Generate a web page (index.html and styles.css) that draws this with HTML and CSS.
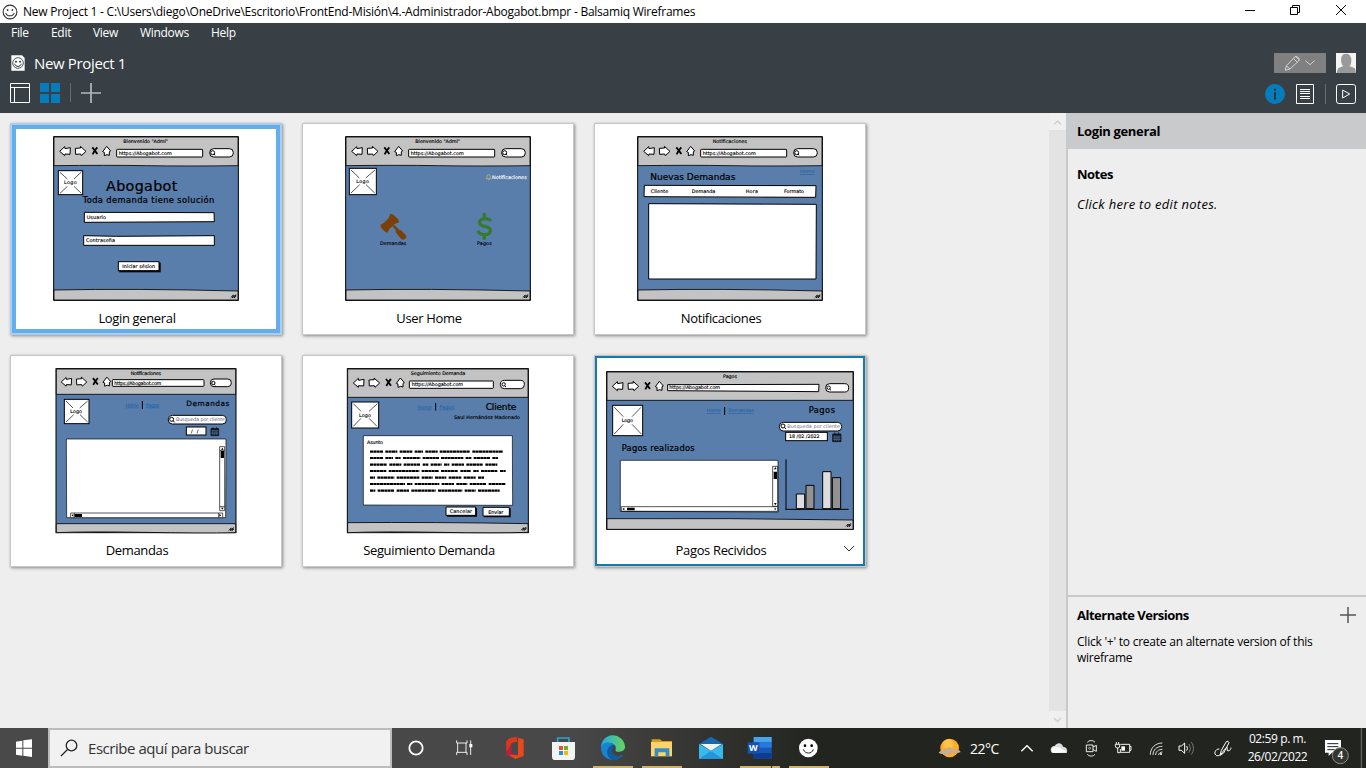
FILE: index.html
```html
<!DOCTYPE html>
<html lang="es">
<head>
<meta charset="utf-8">
<title>New Project 1 - Balsamiq Wireframes</title>
<link rel="stylesheet" href="styles.css">
</head>
<body>
<svg class="defs" width="0" height="0" aria-hidden="true">
  <defs>
    <symbol id="nav" viewBox="170 85 170 45" overflow="visible">
      <g fill="#fff" stroke="#000" stroke-width="3" stroke-linejoin="round">
        <path d="M179 109L194 95L195 101L211 98L210 118L195 117L194 122Z"/>
        <path d="M226 100L242 99L241 94L258 109L244 122L242 117L227 118Z"/>
        <path d="M320 94L332 108L328 110L328 121L321 119L313 122L313 112L308 110Z"/>
      </g>
      <path d="M277 97Q283 104 292 117M292 97Q284 105 278 118" stroke="#000" stroke-width="5.500" fill="none"/>
    </symbol>
    <symbol id="grip" viewBox="0 0 20 16" overflow="visible">
      <path d="M1 12L9 4L6 13L16 3L11 13L18 7" stroke="#000" stroke-width="2.600" fill="none"/>
    </symbol>
    <symbol id="cal" viewBox="0 0 26 28" overflow="visible">
      <path d="M1 5H25V27H1ZM7 0V6M18 0V6" fill="#10151c" stroke="#10151c" stroke-width="2.500"/>
      <path d="M2 11H24M2 16H24M2 21H24M7 11V26M13 11V26M19 11V26" stroke="#5a7eab" stroke-width="1.700"/>
    </symbol>
    <symbol id="face" viewBox="0 0 20 20">
      <circle cx="10" cy="10" r="8.6" fill="#fff" stroke="#333" stroke-width="1.400"/>
      <circle cx="7" cy="7.500" r="1.100" fill="#333"/><circle cx="13" cy="7.500" r="1.100" fill="#333"/>
      <path d="M4.800 11C6 16 14 16 15.200 11" fill="none" stroke="#333" stroke-width="1.300"/>
    </symbol>
  </defs>
</svg>

<header class="titlebar">
  <svg class="title-icon" viewBox="0 0 20 20"><use href="#face"/></svg>
  <span class="title-text">New Project 1 - C:\Users\diego\OneDrive\Escritorio\FrontEnd-Misión\4.-Administrador-Abogabot.bmpr - Balsamiq Wireframes</span>
  <svg class="win-buttons" width="136" height="23" viewBox="0 0 136 23" fill="none" stroke="#000">
    <path d="M15 10.500H25M60.500 7.500H67.500V14.500H60.500ZM62.500 7V5.500H69.500V12.500H68M106 5L116 15M116 5L106 15"/>
  </svg>
</header>

<div class="topbar">
  <nav class="menu">
    <span class="m-file">File</span><span class="m-edit">Edit</span><span class="m-view">View</span><span class="m-windows">Windows</span><span>Help</span>
  </nav>
  <div class="project">
    <svg width="14" height="16" viewBox="0 0 42 48"><path d="M1 1H33L41 9V47H1Z" fill="#fff"/><circle cx="21" cy="24" r="16" fill="#fff" stroke="#333" stroke-width="2.500"/><circle cx="15" cy="20" r="2.500"/><circle cx="27" cy="20" r="2.500"/><path d="M11 26C14 37 28 37 31 26" fill="none" stroke="#333" stroke-width="3"/></svg>
    <span class="project-name">New Project 1</span>
    <svg class="edit-mode" width="52" height="20" viewBox="0 0 156 60"><path fill="#808080" d="M0 0H156V60H0Z"/><path d="M34 52L37 39L62 12Q66 8 71 12L74 15Q78 19 74 24L48 48ZM37 39L48 48M58 16L70 28M64 10L76 21M94 23L108 35L122 23" fill="none" stroke="#ddd" stroke-width="2.600"/></svg>
    <svg width="20" height="20" viewBox="0 0 60 60"><path fill="#f4f4f4" d="M0 0H60V60H0Z"/><path fill="#999" d="M18 35C13 20 14 2 30 2S49 20 44 35L40 39L57 46L60 60H2L6 46L22 39Z"/></svg>
  </div>
  <div class="tools">
    <svg width="110" height="24" viewBox="0 0 110 24" fill="none">
      <path d="M10.500 2.500H29.500V21.500H10.500ZM10.500 6.500H29.500M14.500 6.500V21.500" stroke="#fff"/>
      <path d="M40 2H49V11H40ZM51 2H60V11H51ZM40 13H49V22H40ZM51 13H60V22H51Z" fill="#057dbc"/>
      <path d="M70.500 2V21" stroke="#666b70"/><path d="M91 2V22M81 12H101" stroke="#b5b9bb" stroke-width="1.700"/>
    </svg>
    <svg class="tools-right" width="102" height="24" viewBox="0 0 306 72" fill="none">
      <circle cx="33" cy="39" r="30" fill="#057dbc"/><path d="M33 33V56M33 23V29" stroke="#30383e" stroke-width="6"/>
      <path d="M97.500 10.500H148.500V67.500H97.500ZM108 25.500H138M108 31.500H138M108 37.500H138M108 46.500H138M108 52.500H138" stroke="#fff" stroke-width="3"/>
      <path d="M184.500 9V69" stroke="#666b70" stroke-width="3"/>
      <rect x="217.500" y="10.500" width="57" height="57" rx="7" stroke="#fff" stroke-width="3"/><path d="M236 27L257 39L236 51Z" stroke="#fff" stroke-width="3"/>
    </svg>
  </div>
</div>

<div class="workspace">
  <main class="gallery">
    <article class="card current">
      <svg class="thumb" viewBox="33 27 813 537">
        <rect class="page" x="161" y="65" width="554" height="491"/>
        <path class="bar" d="M162 66H714V152Q560 154 440 152T162 152Z"/>
        <path class="bar" d="M162 525Q400 520 714 528V555H162Z"/>
        <use href="#nav" x="170" y="85" width="170" height="45"/>
        <rect class="box" x="350" y="103" width="258" height="23" rx="2"/><rect class="box" x="629" y="101" width="71" height="25" rx="12"/>
        <circle class="line" cx="638" cy="113" r="6"/><path class="line" d="M642 117L645 121"/>
        <g class="tiny"><text x="370" y="84" textLength="134">Bienvenido "Admi"</text><text x="356" y="119" textLength="159">https://Abogabot.com</text></g>
        <rect class="box" x="175" y="167" width="73" height="72"/><path class="line thin" d="M180 172L202 192M244 171L222 192M180 235L202 214M244 235L222 214"/><text class="tiny" x="192" y="207" textLength="38">Logo</text>
        <text class="hand" x="318" y="227" font-size="43" textLength="214">Abogabot</text>
        <text class="hand" x="248" y="263" font-size="25" textLength="395">Toda demanda tiene solución</text>
        <path class="box" d="M253 292L642 293L643 320L253 322ZM251 362L350 364L643 362L643 391L251 391Z"/>
        <g class="tiny"><text x="260" y="311" textLength="58">Usuario</text><text x="258" y="382" textLength="87">Contraseña</text></g>
        <rect x="358" y="443" width="124" height="29" fill="#000"/><rect class="box" x="355" y="440" width="122" height="27"/>
        <text class="tiny" x="367" y="459" textLength="98">Iniciar sésion</text><use href="#grip" x="691" y="536" width="20" height="16"/>
      </svg>
      <div class="caption">Login general</div>
    </article>

    <article class="card">
      <svg class="thumb" viewBox="24 27 813 537">
        <rect class="page" x="152" y="65" width="554" height="491"/>
        <path class="bar" d="M153 66H705V152Q550 154 430 152T153 152Z"/>
        <path class="bar" d="M153 525Q390 520 705 528V555H153Z"/>
        <use href="#nav" x="161" y="85" width="170" height="45"/>
        <rect class="box" x="341" y="103" width="258" height="23" rx="2"/><rect class="box" x="620" y="101" width="71" height="25" rx="12"/>
        <circle class="line" cx="629" cy="113" r="6"/><path class="line" d="M633 117L636 121"/>
        <g class="tiny"><text x="361" y="84" textLength="134">Bienvenido "Admi"</text><text x="347" y="119" textLength="159">https://Abogabot.com</text></g>
        <rect class="box" x="163" y="160" width="81" height="79"/><path class="line thin" d="M168 165L193 189M240 165L212 189M168 234L194 209M239 234L213 209"/><text class="tiny" x="184" y="205" textLength="38">Logo</text>
        <path d="M573 191Q577 188 576 183Q577 179 581 179Q585 179 586 183Q585 188 589 191ZM578 194H584" fill="none" stroke="#d0c65a" stroke-width="2"/>
        <text class="tiny white" x="591" y="191" textLength="104">Notificaciones</text>
        <g fill="#7b3f08"><path d="M257 329L267 323L281 309L286 296L295 299L310 313L312 322L300 326L283 342L278 353L268 349L257 337Z"/><path d="M302 352Q300 347 306 342L313 345L318 346L334 362V368L326 374L319 373Z"/><path d="M292 334L298 329L313 345L307 350Z"/></g>
        <path d="M587 318C582 309 553 306 554 324C555 339 588 329 586 347C583 364 553 362 549 347M568 294V309M568 359V374" fill="none" stroke="#367a2b" stroke-width="10"/>
        <g class="tiny"><text x="255" y="391" textLength="79">Demandas</text><text x="546" y="391" textLength="44">Pagos</text></g><use href="#grip" x="682" y="536" width="20" height="16"/>
      </svg>
      <div class="caption">User Home</div>
    </article>

    <article class="card">
      <svg class="thumb" viewBox="15 27 813 537">
        <rect class="page" x="143" y="65" width="554" height="491"/>
        <path class="bar" d="M144 66H696V152Q540 154 420 152T144 152Z"/>
        <path class="bar" d="M144 525Q380 520 696 528V555H144Z"/>
        <use href="#nav" x="152" y="85" width="170" height="45"/>
        <rect class="box" x="332" y="103" width="258" height="23" rx="2"/><rect class="box" x="611" y="101" width="71" height="25" rx="12"/>
        <circle class="line" cx="620" cy="113" r="6"/><path class="line" d="M624 117L627 121"/>
        <g class="tiny"><text x="368" y="84" textLength="103">Notificaciones</text><text x="338" y="119" textLength="159">https://Abogabot.com</text></g>
        <text class="hand" x="181" y="195" font-size="27" textLength="255">Nuevas Demandas</text><text class="tiny link" x="630" y="175" textLength="44">Home</text>
        <path class="box" d="M163 211L678 212L677 247L162 245ZM176 266L679 268L678 492H176Z"/>
        <g class="tiny"><text x="182" y="234" textLength="53">Cliente</text><text x="305" y="234" textLength="71">Demanda</text><text x="467" y="234" textLength="37">Hora</text><text x="582" y="234" textLength="60">Formato</text></g><use href="#grip" x="673" y="536" width="20" height="16"/>
      </svg>
      <div class="caption">Notificaciones</div>
    </article>

    <article class="card">
      <svg class="thumb" viewBox="33 18 813 537">
        <rect class="page" x="168" y="56" width="540" height="492"/>
        <path class="bar" d="M169 57H707V133H169Z"/><path class="bar" d="M169 521H707V548Q600 550 430 547T169 548Z"/>
        <use href="#nav" x="175" y="72" width="165" height="45"/>
        <rect class="box" x="337" y="89" width="275" height="20" rx="2"/><rect class="box" x="631" y="87" width="63" height="23" rx="11"/>
        <circle class="line" cx="640" cy="99" r="5"/><path class="line" d="M643 103L646 106"/>
        <g class="tiny"><text x="392" y="74" textLength="91">Notificaciones</text><text x="343" y="104" textLength="141">https://Abogabot.com</text></g>
        <rect class="box" x="193" y="148" width="74" height="73"/><path class="line thin" d="M198 153L219 174M263 153L239 174M198 216L221 194M263 216L240 194"/><text class="tiny" x="211" y="190" textLength="35">Logo</text>
        <g class="tiny link"><text x="377" y="170" textLength="40">Home</text><text x="438" y="170" textLength="40">Pagos</text></g><path class="line" d="M427 153V177"/>
        <text class="hand" x="559" y="167" font-size="22" textLength="129">Demandas</text>
        <rect class="box" x="505" y="196" width="174" height="26" rx="12"/><circle class="line" cx="515" cy="208" r="6"/><path class="line" d="M519 212L524 217"/><text class="tiny gray" x="528" y="214" textLength="147">Busqueda por cliente</text>
        <rect class="box" x="559" y="231" width="59" height="24"/><text class="tiny" x="573" y="248" textLength="22">/ /</text><use href="#cal" x="632" y="231" width="25" height="27"/>
        <path class="box thin" d="M199 267L678 267L677 503H200Z"/>
        <path class="box thin" d="M659 290H674V482H659ZM212 489H668V503H212Z"/><path d="M662 303H672V324H662ZM224 492H246V501H224ZM667 293L671 299H663ZM667 479L671 473H663ZM215 496L220 492V500ZM664 496L658 492V500Z"/>
        <path class="line thin" d="M659 302H674M659 470H674M223 489V503M656 489V503"/><use href="#grip" x="685" y="530" width="19" height="15"/>
      </svg>
      <div class="caption">Demandas</div>
    </article>

    <article class="card">
      <svg class="thumb" viewBox="24 18 813 537">
        <rect class="page" x="157" y="56" width="543" height="492"/>
        <path class="bar" d="M158 57H699V142H158Z"/><path class="bar" d="M158 518Q420 516 699 521V547Q600 550 430 547T158 548Z"/>
        <use href="#nav" x="166" y="75" width="170" height="45"/>
        <rect class="box" x="343" y="93" width="252" height="22" rx="2"/><rect class="box" x="616" y="91" width="72" height="25" rx="12"/>
        <circle class="line" cx="626" cy="103" r="5"/><path class="line" d="M629 107L633 111"/>
        <g class="tiny"><text x="347" y="75" textLength="164">Seguimiento Demanda</text><text x="350" y="108" textLength="154">https://Abogabot.com</text></g>
        <rect class="box" x="170" y="156" width="81" height="78"/><path class="line thin" d="M175 161L198 184M247 161L222 184M175 229L198 205M246 229L222 205"/><text class="tiny" x="192" y="200" textLength="36">Logo</text>
        <g class="tiny link"><text x="367" y="176" textLength="43">Home</text><text x="433" y="176" textLength="44">Pagos</text></g><path class="line" d="M422 159V182"/>
        <text class="hand" x="572" y="179" font-size="27" textLength="92">Cliente</text><text class="tiny" x="477" y="207" textLength="198">Saul Hernández Madonado</text>
        <path class="box thin" d="M205 257L652 257L653 466L205 465Z"/><text class="tiny" x="216" y="283" textLength="48">Asunto</text>
        <g class="scribble"><path d="M225 305H264M271 305H307M314 305H352M359 305H384M391 305H428M434 305H525M532 305H624"/><path d="M225 324H264M271 324H294M301 324H317M324 324H376M383 324H432M438 324H505M512 324H529M536 324H585M592 324H609"/><path d="M225 344H276M283 344H319M326 344H376M383 344H400M407 344H440M447 344H463M470 344H507M514 344H564M571 344H607"/><path d="M225 363H274M281 363H373M380 363H432M438 363H489M496 363H528M535 363H551M558 363H608M615 363H632"/><path d="M225 383H240M247 383H298M305 383H373M380 383H413M420 383H454M461 383H499M506 383H542M549 383H567"/><path d="M225 402H330M336 402H352M359 402H433M440 402H477M484 402H517M524 402H574M581 402H632"/><path d="M225 422H241M248 422H298M305 422H342M349 422H422M429 422H502M509 422H542M549 422H614"/></g>
        <path d="M456 474H546V500H456ZM567 475H647V502H567Z"/><path class="box" d="M453 471H542V496H453ZM564 472H643V498H564Z"/>
        <g class="tiny"><text x="464" y="489" textLength="67">Cancelar</text><text x="580" y="491" textLength="45">Enviar</text></g><use href="#grip" x="677" y="529" width="20" height="15"/>
      </svg>
      <div class="caption">Seguimiento Demanda</div>
    </article>

    <article class="card hovered">
      <svg class="thumb" viewBox="15 18 813 537">
        <rect class="page" x="50" y="65" width="740" height="473"/>
        <path class="bar" d="M51 66H789V151H51Z"/><path class="bar" d="M51 506Q420 504 789 510V538H51Z"/>
        <use href="#nav" x="58" y="85" width="170" height="45"/>
        <path class="box" d="M233 104L687 103L686 125L233 122Z"/><rect class="box" x="707" y="101" width="69" height="25" rx="12"/>
        <circle class="line" cx="716" cy="113" r="5"/><path class="line" d="M719 117L723 121"/>
        <g class="tiny"><text x="399" y="84" textLength="42">Pagos</text><text x="238" y="116" textLength="152">https://Abogabot.com</text></g>
        <rect class="box" x="68" y="166" width="90" height="91"/><path class="line thin" d="M73 172L100 200M153 172L126 200M73 252L100 223M154 252L126 223"/><text class="tiny" x="95" y="215" textLength="34">Logo</text>
        <g class="tiny link"><text x="350" y="187" textLength="42">Home</text><text x="415" y="187" textLength="76">Demandas</text></g><path class="line" d="M404 171V195"/>
        <text class="hand" x="656" y="190" font-size="25" textLength="79">Pagos</text><text class="hand" x="95" y="302" font-size="25" textLength="219">Pagos realizados</text>
        <rect class="box" x="568" y="217" width="187" height="26" rx="12"/><circle class="line" cx="579" cy="228" r="6"/><path class="line" d="M583 232L588 237"/><text class="tiny gray" x="592" y="234" textLength="158">Busqueda por cliente</text>
        <rect class="box" x="587" y="247" width="125" height="25"/><text class="tiny" x="597" y="264" textLength="92">18 /02 /2022</text><use href="#cal" x="727" y="247" width="27" height="29"/>
        <path class="box thin" d="M91 331L564 331L565 486L91 484ZM548 349H563V469H548ZM94 470H563V484H94Z"/><path d="M551 365H561V387H551ZM111 473H134V481H111ZM556 351L560 358H552ZM556 466L560 459H552ZM97 477L103 473V481ZM559 477L554 473V481Z"/>
        <path class="line" d="M588 328V478M586 478H776"/><g stroke="#000" stroke-width="3"><path fill="#ddd" d="M619 432H644V476H619ZM698 365H723V476H698Z"/><path fill="#929292" d="M648 406H672V476H648ZM727 383H752V476H727Z"/></g><use href="#grip" x="766" y="518" width="20" height="15"/>
      </svg>
      <div class="caption">Pagos Recividos</div>
      <svg class="more" width="12" height="8" viewBox="0 0 12 8"><path d="M1 1L6 6L11 1" fill="none" stroke="#333"/></svg>
    </article>
  </main>
  <div class="scrollbar">
    <svg width="17" height="17" viewBox="0 0 17 17"><path d="M5 11.500L8.500 8L12 11.500" fill="none" stroke="#d0d0d0" stroke-width="1.500"/></svg>
    <div class="track"></div>
    <svg width="17" height="17" viewBox="0 0 17 17"><path d="M5 7L8.500 10.500L12 7" fill="none" stroke="#d0d0d0" stroke-width="1.500"/></svg>
  </div>
  <aside class="panel">
    <h2 class="panel-title">Login general</h2>
    <section class="notes"><h3>Notes</h3><p class="hint">Click here to edit notes.</p></section>
    <section class="versions">
      <div class="versions-head"><h3>Alternate Versions</h3><svg width="16" height="16" viewBox="0 0 16 16"><path d="M8 0V16M0 8H16" stroke="#555" stroke-width="1.500"/></svg></div>
      <p>Click '+' to create an alternate version of this<br>wireframe</p>
    </section>
  </aside>
</div>

<footer class="taskbar">
  <div class="start"><svg width="48" height="40" viewBox="0 9 144 120"><path fill="#fff" d="M48 50L67 47V68H48ZM70 46L96 43V68H70ZM48 71H67V92L48 89ZM70 71H96V96L70 92Z"/></svg></div>
  <div class="search"><svg width="18" height="18" viewBox="0 0 18 18" fill="none" stroke="#222" stroke-width="1.300"><circle cx="11.500" cy="6.500" r="5.300"/><path d="M7.500 10.500L1 17"/></svg><span>Escribe aquí para buscar</span></div>
  <div class="apps">
    <svg viewBox="-24 9 147 120"><circle cx="48" cy="69" r="20" fill="none" stroke="#fff" stroke-width="5.500"/></svg>
    <svg viewBox="123 9 147 120"><path d="M170 46V54H201V46M170 90V82H201V90M173 54V82M198 54V82M212 46V90" fill="none" stroke="#eee" stroke-width="3"/><path d="M208 57H217V67H208Z" fill="#fff"/></svg>
    <svg viewBox="270 9 147 120"><path d="M318 50L328 40L350 35V50L334 55V84L347 88V101L319 91Z" fill="#b91f3e"/><path d="M343 36L371 43V93L346 102L326 89L354 91V38Z" fill="#e64a19"/><path d="M328 40L350 35L352 50L336 53L319 80V48Z" fill="#d83b1b"/></svg>
    <svg viewBox="417 9 147 120"><path d="M473 53V39H507V53" fill="none" stroke="#2da5cf" stroke-width="5"/><path d="M456 51H525V95Q525 105 515 105H466Q456 105 456 95Z" fill="#f3f3f3"/><path fill="#e9512e" d="M477 63H489V75H477Z"/><path fill="#75ad2b" d="M492 63H504V75H492Z"/><path fill="#2394dc" d="M477 78H489V90H477Z"/><path fill="#f8b21a" d="M492 78H504V90H492Z"/></svg>
    <svg viewBox="564 9 147 120"><defs><linearGradient id="edge"><stop stop-color="#23a8e7"/><stop offset="1" stop-color="#66d65b"/></linearGradient></defs><path d="M603 69A36 36 0 0 1 675 65C675 76 666 81 651 80C644 78 648 73 647 65C641 50 613 50 603 69Z" fill="url(#edge)"/><path d="M603 69C603 52 631 47 642 60C630 60 623 72 630 84C638 98 658 94 670 89C651 116 603 107 603 69Z" fill="#1684d1"/><path d="M642 60C621 60 612 87 635 104C648 107 663 100 670 89C653 97 638 88 635 80Z" fill="#125b9e"/><path class="running" d="M579 123H699V129H579Z"/></svg>
    <svg viewBox="711 9 147 120"><path d="M755 43H780L786 48H816V93H755Z" fill="#d99b13"/><path d="M753 51H816V94H753Z" fill="#fbd36b"/><path d="M764 94V70H808V94H797V82H775V94Z" fill="#388bc5"/><path class="running" d="M726 123H846V129H726Z"/></svg>
    <svg viewBox="858 9 147 120"><path d="M897 57L933 35L969 57V101H897Z" fill="#116ab2"/><path d="M897 57L933 78L969 57V102H897Z" fill="#38b8ed"/><path d="M902 57H965L933 77Z" fill="#f3f3ef"/><path d="M933 78L969 102H897Z" fill="#2395d9"/></svg>
    <svg viewBox="1005 9 147 120"><path d="M1061 36H1115V101H1061Z" fill="#1757b5"/><path d="M1061 36H1115V52H1061Z" fill="#49a4ec"/><path d="M1061 52H1115V68H1061Z" fill="#2879d8"/><path d="M1061 84H1115V101H1061Z" fill="#0e3c8e"/><path d="M1043 52H1078V86H1043Z" fill="#1552ad"/><text x="1047" y="79" textLength="27" class="word">W</text><path class="running" d="M1020 123H1113V129H1020ZM1116 123H1140V129H1116Z"/></svg>
    <svg viewBox="1152 9 147 120"><circle cx="1225" cy="69" r="28" fill="#fff"/><circle cx="1215" cy="62" r="4"/><circle cx="1235" cy="62" r="4"/><path d="M1210 73C1215 88 1236 88 1240 73" fill="none" stroke="#222" stroke-width="3"/><path class="running" d="M1167 123H1287V129H1167Z"/></svg>
  </div>
  <div class="tray">
    <svg class="weather" viewBox="0 9 120 120"><circle cx="71" cy="69" r="28" fill="#ffad22"/><circle cx="67" cy="58" r="16" fill="#ffc148"/><path d="M38 83Q43 73 55 75Q67 59 82 73Q99 71 104 81Q93 87 78 84Q68 95 51 87Q44 88 38 83Z" fill="#c9ad91"/></svg>
    <span class="temp">22°C</span>
    <svg class="slot" viewBox="255 9 96 120"><path d="M286 79L303 62L320 79" fill="none" stroke="#fff" stroke-width="4"/></svg>
    <svg class="slot" viewBox="351 9 96 120"><path d="M376 82C370 68 381 61 386 63C394 49 409 54 411 65C422 66 426 75 422 84H380Z" fill="#ddd"/><path d="M376 73C386 59 399 65 422 82L380 84Z" fill="#fff"/></svg>
    <svg class="slot" viewBox="447 9 96 120"><path d="M481 60H501V80H481ZM501 66L511 61V79L501 74M484 52C490 45 501 45 507 52M484 88C490 95 501 95 507 88" fill="none" stroke="#eee" stroke-width="3"/><circle cx="491" cy="70" r="3" fill="none" stroke="#eee" stroke-width="2"/></svg>
    <svg class="slot" viewBox="543 9 96 120"><path d="M583 58H611V82H583V72M611 64H615V76H611M571 51V57M578 51V57M568 58H581V63Q581 69 575 69Q568 69 568 63ZM575 69V83H583" fill="none" stroke="#fff" stroke-width="2.800"/><path d="M586 64H597V77H586Z" fill="#fff"/></svg>
    <svg class="slot" viewBox="639 9 96 120"><path d="M673 89C673 68 689 54 709 54M681 90C681 74 693 64 709 64M689 90C689 80 697 73 709 73M698 90C698 85 703 81 709 81" fill="none" stroke="#ddd" stroke-width="3"/><circle cx="705" cy="87" r="3" fill="#fff"/></svg>
    <svg class="slot" viewBox="735 9 96 120"><path d="M759 63H766L776 54V85L766 76H759ZM782 63Q787 70 782 77" fill="none" stroke="#fff" stroke-width="3"/><path d="M789 57Q798 70 789 83M796 51Q809 70 796 89" fill="none" stroke="#888" stroke-width="2.500"/></svg>
    <svg class="pen" viewBox="831 9 108 120"><path d="M882 91L886 76L901 50Q907 46 909 53L893 84ZM880 72C867 71 862 88 872 92C885 96 893 72 902 67C908 65 899 77 906 78C912 77 915 72 915 68" fill="none" stroke="#fff" stroke-width="3"/></svg>
    <div class="clock"><span>02:59 p. m.</span><span>26/02/2022</span></div>
    <svg class="notice" viewBox="1170 9 150 120"><path d="M1197 45H1245V83H1218L1208 93V83H1197Z" fill="#fff"/><path d="M1204 56H1237M1204 65H1237M1204 74H1226" stroke="#222" stroke-width="3"/><circle cx="1243" cy="92" r="24" fill="#343632" stroke="#8b8d89" stroke-width="3"/><text x="1243" y="103" text-anchor="middle" class="count">4</text><path d="M1306 9V129" stroke="#73756f" stroke-width="3"/></svg>
  </div>
</footer>
</body>
</html>
```
FILE: styles.css
```css
* { box-sizing: border-box; }
body { margin: 0; width: 1366px; height: 768px; overflow: hidden; display: flex; flex-direction: column; font-family: "Open Sans", "Noto Sans", sans-serif; color: #000; background: #eee; }
svg { display: block; flex: none; }
h2, h3, p { margin: 0; }
.defs { position: absolute; }
.titlebar { height: 23px; flex: none; background: #fff; display: flex; align-items: center; }
.title-icon { width: 16px; height: 16px; margin-left: 2px; }
.title-text { font-size: 12px; margin-left: 5px; white-space: nowrap; letter-spacing: -0.24px; }
.win-buttons { margin-left: auto; }
.topbar { height: 90px; flex: none; background: #383f45; color: #fff; }
.menu { height: 19px; padding-left: 11px; display: flex; align-items: center; font-size: 12px; letter-spacing: -0.3px; }
.m-file { width: 40px; }
.m-edit { width: 42px; }
.m-view { width: 47px; }
.m-windows { width: 71px; }
.project { height: 40px; display: flex; align-items: center; padding: 1px 10px 0 11px; }
.project-name { font-size: 15px; margin-left: 9px; letter-spacing: -0.35px; }
.edit-mode { margin-left: auto; margin-right: 10px; }
.tools { height: 24px; display: flex; margin-top: -1px; }
.tools-right { margin-left: auto; }
.workspace { height: 615px; flex: none; display: flex; }
.gallery { width: 1049px; padding: 10px; display: grid; grid-template-columns: repeat(3, 272px); grid-auto-rows: 212px; gap: 20px; align-content: start; }
.card { position: relative; background: #fff; border: 1px solid #c6c6c6; box-shadow: 1px 1px 3px #888; }
.current { border-color: #a9cff0; box-shadow: inset 0 0 0 1px #a9cff0, inset 0 0 0 5px #64aeec, 1px 1px 3px #888; }
.hovered { box-shadow: inset 0 0 0 2px #147aaa, 1px 1px 3px #888; }
.thumb { width: 271px; height: 179px; }
.caption { height: 31px; line-height: 30px; text-align: center; padding-right: 18px; font-size: 13px; letter-spacing: -0.35px; }
.more { position: absolute; right: 10px; bottom: 13px; }
.page { fill: #5a7eab; stroke: #000; stroke-width: 3; }
.bar { fill: #c3c3c3; stroke: #000; stroke-width: 2.5; }
.box { fill: #fff; stroke: #000; stroke-width: 3; }
.line { fill: none; stroke: #000; stroke-width: 3; }
.thin { stroke-width: 2; }
.hand { font-family: "DejaVu Sans", sans-serif; stroke: #000; stroke-width: 0.7; }
.tiny { font-family: "DejaVu Sans", sans-serif; font-size: 14.5px; stroke: #000; stroke-width: 0.4; }
.white { fill: #fff; stroke: #fff; }
.gray { fill: #667; stroke: none; }
.link { fill: #125ba5; stroke: none; text-decoration: underline; }
.scribble { fill: none; stroke: #000; stroke-width: 6.5; stroke-dasharray: 9 1; }
.scrollbar { width: 17px; display: flex; flex-direction: column; background: #f0f0f0; }
.track { flex: 1; background: #e3e3e3; }
.panel { width: 300px; border-left: 2px solid #c7c9cb; display: flex; flex-direction: column; }
.panel-title { height: 36px; line-height: 36px; padding-left: 9px; background: #c8cacb; font-size: 13px; letter-spacing: -0.35px; }
.notes { flex: 1; padding: 16px 9px; }
h3 { font-size: 13px; line-height: 18px; letter-spacing: -0.5px; }
.hint { font-size: 13px; line-height: 20px; margin-top: 11px; font-style: italic; letter-spacing: 0.3px; }
.versions { height: 133px; border-top: 2px solid #c7c9cb; padding: 9px 10px 0 9px; }
.versions-head { display: flex; justify-content: space-between; align-items: center; }
.versions p { font-size: 12px; line-height: 16px; margin-top: 10px; letter-spacing: -0.23px; white-space: nowrap; }
.taskbar { height: 40px; flex: none; display: flex; background: linear-gradient(90deg, #494949 0, #484848 42%, #30312d 53%, #22251f 60%, #22251f 100%); color: #fff; }
.start { width: 48px; }
.search { width: 344px; background: #f1f1f1; border: 2px solid #bcbcbc; display: flex; align-items: center; padding-left: 10px; color: #333; }
.search span { margin-left: 10px; font-size: 15px; letter-spacing: -0.45px; }
.apps { display: flex; }
.apps svg { width: 49px; height: 40px; }
.running { fill: #cdb26a; }
.word { fill: #fff; font: 700 27px "Open Sans", sans-serif; }
.tray { margin-left: auto; display: flex; align-items: center; }
.weather { width: 40px; height: 40px; }
.temp { width: 45px; padding-left: 4px; font-size: 14px; letter-spacing: -0.5px; }
.slot { width: 32px; height: 40px; }
.pen { width: 36px; height: 40px; }
.clock { width: 77px; height: 40px; display: flex; flex-direction: column; align-items: center; padding-top: 2px; font-size: 12px; line-height: 18px; letter-spacing: -0.4px; white-space: nowrap; }
.notice { width: 50px; height: 40px; }
.count { fill: #fff; font: 600 30px "Open Sans", sans-serif; }
```
